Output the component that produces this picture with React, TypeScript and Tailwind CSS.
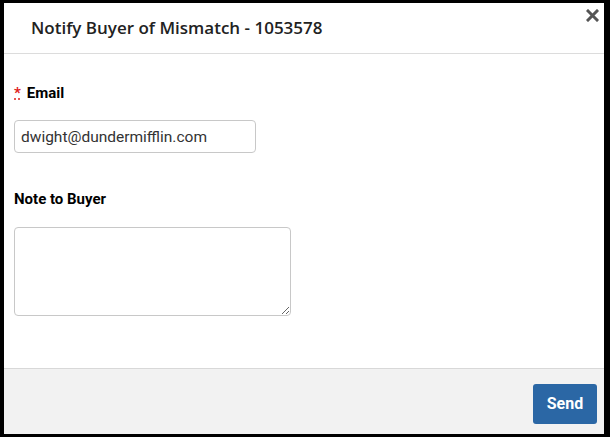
import React from 'react';

const App: React.FC = () => {
    return (
        <div className="h-[437px] w-[610px] bg-black pt-[3px] pl-[4px] pr-[6px] pb-[3px]">
            <div className="flex h-full flex-col bg-white" style={{ fontFamily: 'Roboto, "Liberation Sans", sans-serif' }}>
                <div className="relative flex h-[51px] shrink-0 items-center border-b border-[#dcdcdc] pl-[27px]">
                    <h2 className="text-[17px] font-semibold text-[#222]" style={{ fontFamily: '"Open Sans", "Noto Sans", sans-serif' }}>
                        Notify Buyer of Mismatch - 1053578
                    </h2>
                    <button className="absolute right-[5px] top-[6px] text-[#555]" aria-label="Close">
                        <svg width="13" height="13" viewBox="0 0 13 13">
                            <path d="M2 2 L11 11 M11 2 L2 11" stroke="#555" strokeWidth="3" strokeLinecap="square" />
                        </svg>
                    </button>
                </div>

                <div className="flex-1 pl-[10px] pt-[29px]">
                    <label className="flex h-[20px] items-center text-[15px] font-bold text-black">
                        <abbr title="required" className="mr-[6px] text-[#e0201a]" style={{ textDecoration: 'underline dotted #e0201a' }}>*</abbr>
                        Email
                    </label>
                    <input
                        type="email"
                        defaultValue="dwight@dundermifflin.com"
                        className="mt-[17px] block h-[33px] w-[242px] rounded-[4px] border border-[#c8c8c8] px-[6px] text-[15.5px] text-[#333] outline-none"
                    />

                    <label className="mt-[36px] flex h-[20px] items-center text-[15px] font-bold text-black">Note to Buyer</label>
                    <textarea className="mt-[18px] block h-[89px] w-[277px] rounded-[4px] border border-[#c8c8c8] px-[6px] py-[4px] text-[15px] outline-none" />
                </div>

                <div className="flex h-[66px] shrink-0 items-start justify-end border-t border-[#d8d8d8] bg-[#f2f2f2] pr-[7px] pt-[15px]">
                    <button className="h-[40px] w-[64px] rounded-[3px] bg-[#2b67a5] text-[16px] font-bold text-white">Send</button>
                </div>
            </div>
        </div>
    );
};

export default App;
